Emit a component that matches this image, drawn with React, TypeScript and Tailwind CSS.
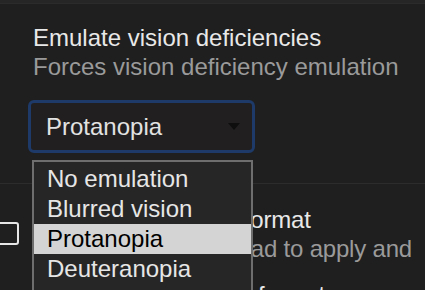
const OPTIONS = ['No emulation', 'Blurred vision', 'Protanopia', 'Deuteranopia', 'Tritanopia', 'Achromatopsia'];

export default function App() {
  const selected = 'Protanopia';

  return (
    <div className="relative w-[425px] h-[290px] overflow-hidden bg-[#1f1f1f] font-['Liberation_Sans',Arial,sans-serif] text-[24px] leading-[29px]">
      <div className="h-[4px] bg-[#262626] border-b border-[#2b2b2b]" />

      <div className="pl-[33px] pt-[19px]">
        <div className="text-[#e8e8e8]">Emulate vision deficiencies</div>
        <div className="text-[#9a9a9a]">Forces vision deficiency emulation</div>
        <div className="mt-[19px] -ml-[5px] w-[227px] h-[53px] rounded-[6px] border-[3px] border-[#1d3a68] bg-[#211f1f] flex items-center pl-[15px] pr-[12px]">
          <span className="flex-1 text-[#e2e2e2]">{selected}</span>
          <svg width="12" height="7" viewBox="0 0 12 7">
            <path d="M0 0 L12 0 L6 7 Z" fill="#0e0e0e" />
          </svg>
        </div>
      </div>

      <div className="mt-[30px] h-px bg-[#2c2c2c]" />

      <div className="flex items-start pt-[21px] -ml-[5px]">
        <div className="mt-[17px] w-[24px] h-[23px] shrink-0 rounded-[3px] border-2 border-[#e6e6e6]" />
        <div className="ml-[13px] whitespace-nowrap tracking-[-0.2px]">
          <div className="text-[#e8e8e8]">Disable AVIF image format</div>
          <div className="text-[#9a9a9a]">Requires a page reload to apply and</div>
          <div className="mt-[17px] text-[#e8e8e8]">Disable WebP image format</div>
        </div>
      </div>

      {/* open select popup */}
      <div className="absolute left-[32px] top-[160px] w-[221px] border-2 border-[#6e6e6e] bg-[#262626] pt-[2px]">
        {OPTIONS.map(o => (
          <div
            key={o}
            className={`h-[30px] leading-[30px] pl-[13px] ${o === selected ? 'bg-[#d4d4d4] text-black' : 'text-[#e6e6e6]'}`}
          >
            {o}
          </div>
        ))}
      </div>
    </div>
  );
}
